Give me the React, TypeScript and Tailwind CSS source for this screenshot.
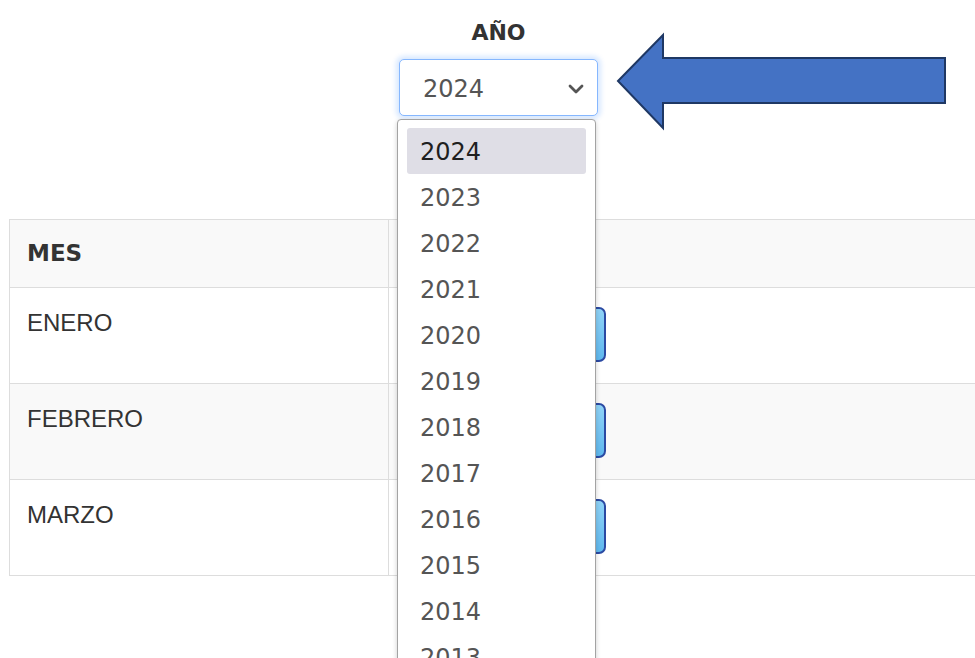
import { ChevronDown } from 'lucide-react';

// Year filter + monthly table, with the native year list shown open

const YEARS = [2024, 2023, 2022, 2021, 2020, 2019, 2018, 2017, 2016, 2015, 2014, 2013, 2012];
const MONTHS = ['ENERO', 'FEBRERO', 'MARZO'];

function YearPicker() {
  return (
    <div className="relative ml-[399px] flex w-[199px] flex-col items-center">
      <label className="mt-[19px] h-[27px] text-[22px] font-bold leading-[27px] text-[#333]">AÑO</label>
      <div className="mt-[13px] flex h-[57px] w-[199px] items-center justify-between rounded-[5px] border border-[#86b7fe] bg-white pl-[23px] pr-[9px] pt-[2px] shadow-[0_0_5px_3px_rgba(13,110,253,0.16)]">
        <span className="text-[24px] leading-none text-[#555]">2024</span>
        <ChevronDown className="h-[24px] w-[24px] text-[#555]" strokeWidth={2.8} />
      </div>

      {/* open option list */}
      <div className="absolute left-[-2px] top-[119px] z-20 w-[199px] rounded-[4px] border-[1.5px] border-[#a3a3a3] bg-white pt-[8px] shadow-[0_2px_5px_rgba(0,0,0,0.2)]">
        {YEARS.map((y, i) => (
          <div
            key={y}
            className={`mx-[9px] flex h-[46px] items-center rounded-[3px] pl-[13px] pt-[2px] text-[24px] leading-none ${
              i === 0 ? 'bg-[#dfdee6] text-[#1f1f1f]' : 'text-[#555]'
            }`}
          >
            {y}
          </div>
        ))}
      </div>
    </div>
  );
}

function Pointer() {
  return (
    <svg className="absolute left-[610px] top-[28px] z-30" width="345" height="108" viewBox="0 0 345 108">
      <polygon
        points="8,53 53,7 53,30 335,30 335,75 53,75 53,100"
        fill="#4472c4"
        stroke="#1f3864"
        strokeWidth="2"
        strokeLinejoin="miter"
      />
    </svg>
  );
}

function MonthTable() {
  return (
    <table className="ml-[9px] mt-[103px] w-[1000px] border-collapse border border-[#dddddd]">
      <thead>
        <tr className="h-[68px] bg-[#f9f9f9]">
          <th className="w-[379px] border border-[#dddddd] pl-[17px] text-left text-[23px] font-bold text-[#333]">MES</th>
          <th className="border border-[#dddddd]"></th>
        </tr>
      </thead>
      <tbody>
        {MONTHS.map((m, i) => (
          <tr key={m} className={`h-[96px] ${i % 2 === 1 ? 'bg-[#f9f9f9]' : 'bg-white'}`}>
            <td
              className="border border-[#dddddd] pl-[17px] pt-[23px] align-top text-[24px] leading-[24px] text-[#333]"
              style={{ fontFamily: '"Liberation Sans", Arial, sans-serif' }}
            >
              {m}
            </td>
            <td className="border border-[#dddddd] pl-[27px] pt-[19px] align-top">
              <button className="h-[55px] w-[190px] rounded-[7px] border-2 border-[#2b4aa3] bg-gradient-to-b from-[#8fd3f7] to-[#5fb8ee]"></button>
            </td>
          </tr>
        ))}
      </tbody>
    </table>
  );
}

export default function App() {
  return (
    <div
      className="relative h-[658px] w-[975px] overflow-hidden bg-white"
      style={{ fontFamily: '"DejaVu Sans", Verdana, sans-serif' }}
    >
      <YearPicker />
      <Pointer />
      <MonthTable />
    </div>
  );
}
